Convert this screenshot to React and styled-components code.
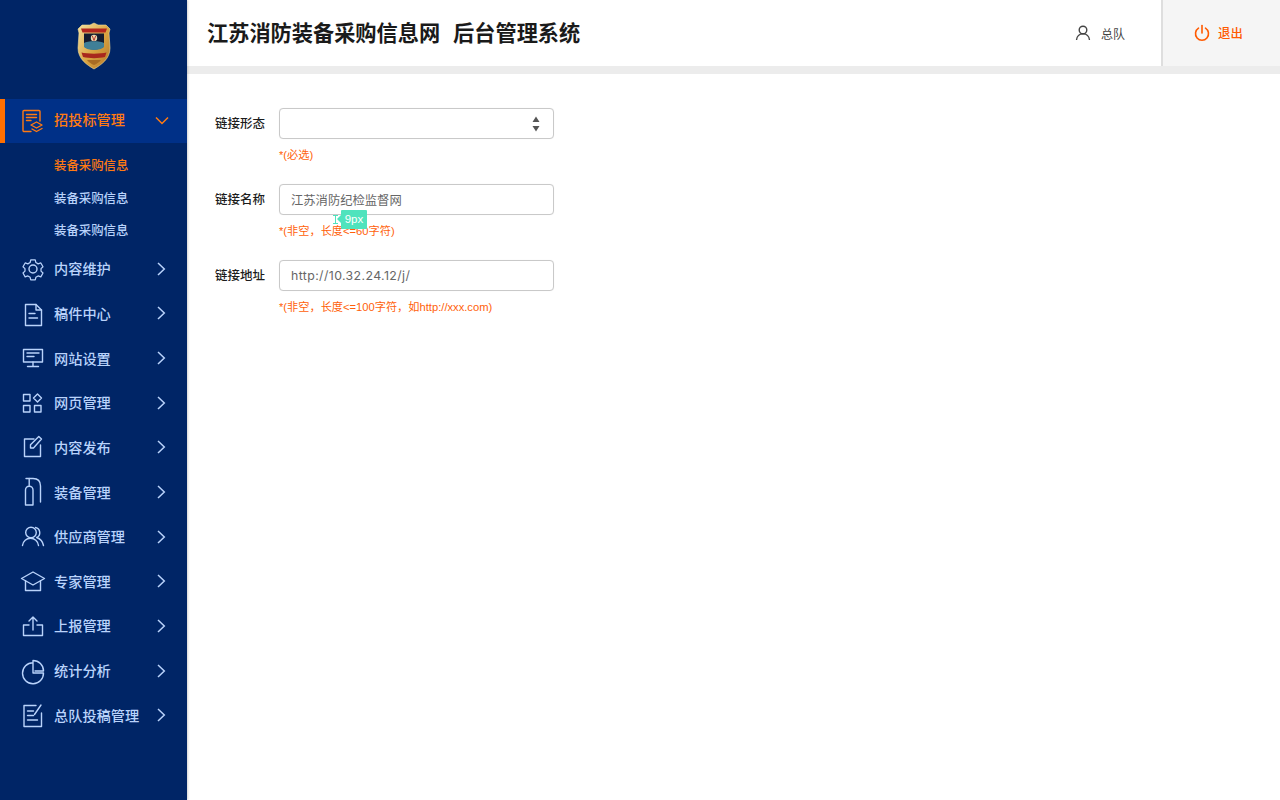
import React from 'react'
import styled, { createGlobalStyle } from 'styled-components'

const Global = createGlobalStyle`
  html, body { margin: 0; padding: 0; background: #fff; }
  body { font-family: "Liberation Sans", "Noto Sans CJK SC", sans-serif; }
  * { box-sizing: border-box; }
`

const Page = styled.div`
  display: flex;
  width: 1280px;
  height: 800px;
  overflow: hidden;
`
const Side = styled.aside`
  width: 187px;
  flex: none;
  background: #002566;
  box-shadow: 1px 0 2px rgba(0, 0, 0, 0.18);
  z-index: 1;
`
const LogoBox = styled.div`
  height: 99px;
  padding: 22px 0 0 77px;
`
const Row = styled.div`
  display: flex;
  align-items: center;
  height: ${p => (p.$open ? '44px' : '44.65px')};
  padding-left: ${p => (p.$open ? '16px' : '21px')};
  background: ${p => (p.$open ? '#003087' : 'transparent')};
  border-left: ${p => (p.$open ? '5px solid #ff6f00' : 'none')};
  color: ${p => (p.$open ? '#ff7a12' : '#b9d3fb')};
  font-size: 14.2px;
  font-weight: 500;
`
const IconSlot = styled.span`
  width: 24px;
  height: 24px;
  flex: none;
  display: flex;
  svg { display: block; overflow: visible; }
`
const RowName = styled.span`
  margin-left: 9px;
  padding-bottom: ${p => (p.$open ? '4px' : '1px')};
  flex: 1;
  white-space: nowrap;
`
const Arrow = styled.span`
  width: ${p => (p.$open ? '14px' : '12px')};
  height: 14px;
  margin-right: ${p => (p.$open ? '18px' : '20px')};
  display: flex;
`
const SubList = styled.div`
  padding-top: 7px;
  margin-bottom: -1px;
`
const SubItem = styled.div`
  height: 32.5px;
  line-height: 32px;
  padding-left: 54px;
  font-size: 12.4px;
  font-weight: 500;
  color: ${p => (p.$on ? '#ff7a12' : '#b9d3fb')};
`
const Main = styled.main`
  flex: 1;
  min-width: 0;
  display: flex;
  flex-direction: column;
`
const Top = styled.header`
  height: 74px;
  display: flex;
  align-items: stretch;
  border-bottom: 8px solid #ececec;
`
const Title = styled.h1`
  flex: 1;
  margin: 0;
  padding-left: 20px;
  font-family: "Noto Sans CJK SC", sans-serif;
  font-size: 21.2px;
  font-weight: 700;
  line-height: 64px;
  color: #1a1a1a;
  white-space: nowrap;
`
const TitleTail = styled.span`
  margin-left: 13px;
`
const User = styled.div`
  width: 86px;
  display: flex;
  align-items: center;
  gap: 10px;
  font-size: 12px;
  color: #444;
`
const Logout = styled.div`
  width: 119px;
  display: flex;
  align-items: center;
  padding-left: 31px;
  gap: 8px;
  background: #f5f5f5;
  border-left: 2px solid #dedede;
  color: #ff5a00;
  font-size: 12.4px;
  font-weight: 500;
`
const Form = styled.form`
  position: relative;
  padding: 34px 0 0 28px;
  display: flex;
  flex-direction: column;
  gap: 22.5px;
`
const Field = styled.div`
  display: grid;
  grid-template-columns: 50px 275px;
  column-gap: 14px;
  row-gap: 9.5px;
  align-items: center;
`
const Label = styled.label`
  font-size: 12.5px;
  font-weight: 500;
  line-height: 33px;
  height: 31px;
  color: #1c1c1c;
  white-space: nowrap;
`
const Control = styled.div`
  height: 31px;
  padding: 0 11px;
  display: flex;
  align-items: center;
  justify-content: space-between;
  border: 1px solid #c9c9c9;
  border-radius: 4px;
  box-shadow: 0 0 1px rgba(0, 0, 0, 0.08);
  font-family: Inter, "Noto Sans CJK SC", sans-serif;
  font-size: 12.3px;
  letter-spacing: ${p => (p.$url ? '0.4px' : '0')};
  color: #666;
  background: #fff;
`
const SortBox = styled.span`
  display: flex;
  margin-right: 2px;
`
const Hint = styled.div`
  grid-column: 2;
  height: 13px;
  line-height: 13px;
  font-size: 11.2px;
  color: #ff5f0a;
  white-space: nowrap;
`
const Measure = styled.div`
  position: absolute;
  left: 146px;
  top: 136px;
  display: flex;
  align-items: center;
  height: 19px;
`
const MeasureTag = styled.span`
  position: relative;
  margin-left: 3px;
  width: 26px;
  height: 19px;
  line-height: 19px;
  text-align: center;
  font-size: 11.5px;
  color: #fff;
  background: #4fe3bd;
  border-radius: 1px;
  &::before {
    content: "";
    position: absolute;
    left: -4px;
    top: 5px;
    border-style: solid;
    border-width: 4.5px 4px 4.5px 0;
    border-color: transparent #4fe3bd transparent transparent;
  }
`

const Ic = ({ children }) => (
  <svg width="24" height="24" viewBox="0 0 24 24" fill="none" stroke="currentColor" strokeWidth="1.4" strokeLinejoin="round" strokeLinecap="round">
    {children}
  </svg>
)

const Right = () => (
  <svg width="12" height="14" viewBox="0 0 12 14" fill="none" stroke="currentColor" strokeWidth="1.5"><path d="M3 1 9.300 7 3 13" /></svg>
)
const Down = () => (
  <svg width="14" height="14" viewBox="0 0 14 14" fill="none" stroke="currentColor" strokeWidth="1.5"><path d="M1 3.500 7 9.500 13 3.500" /></svg>
)

const icons = {
  tender: <Ic><path d="M10 22.500H3a1 1 0 0 1-1-1V2.500a1 1 0 0 1 1-1h15a1 1 0 0 1 1 1V12" /><path d="M5.500 5.500h10M5.500 8.500h10M5.500 11.500H10" /><path d="m10 16 5.500-3 5.500 3-5.500 3z" /><path d="m11 20 4.500 2.500 5.500-3" /></Ic>,
  gear: <Ic><circle cx="12" cy="12" r="4" /><path d="M9.500 1.800h5l.7 3 2.500 1.500 3-1 2.400 4.200-2.200 2.100v2.800l2.200 2.100-2.400 4.200-3-1-2.500 1.500-.7 3h-5l-.7-3-2.500-1.500-3 1L.9 16.500l2.200-2.100v-2.800L.9 9.500l2.400-4.200 3 1 2.500-1.500z" transform="translate(1.200 1.200) scale(.9)" /></Ic>,
  file: <Ic><path d="M4.500 3.500H15L20.500 9v15.500h-16z" /><path d="M15 3.500V9h5.500" /><path d="M8 12.500h6M8 17h8.500" /></Ic>,
  screen: <Ic><rect x="2.500" y="3.500" width="19" height="12.500" /><path d="M6 7h12M6 10.500h7M12 16v4.500M6.500 20.500h11" /></Ic>,
  apps: <Ic><rect x="2.500" y="3.500" width="6.500" height="6.500" /><path d="m16.500 3 4 4-4 4-4-4z" /><rect x="2.500" y="14.500" width="6.500" height="6.500" /><rect x="13.500" y="14.500" width="6.500" height="6.500" /></Ic>,
  edit: <Ic><path d="M13 4H3.500v17.500h16V10" /><path d="M9.500 13V9.800L17.800 1.500l2.700 2.500-8 9z" /></Ic>,
  tank: <Ic><path d="M4.500 25V10a3.700 3.700 0 0 1 7.500 0v15z" /><path d="M5-1.500h7c5 0 7.500 2.500 7.500 7.500v16" /><path d="M8.200-1.500v7" /></Ic>,
  people: <Ic><circle cx="10" cy="7.500" r="5.300" /><path d="M1.500 20.500c.5-4.500 4-7.200 8-7.200s7.500 2.700 8 7.200" /><path d="M14.500 2.500a5.300 5.300 0 0 1 1.200 10c3.300 1.200 6 3.700 6.800 8" /></Ic>,
  cap: <Ic><path d="M12 3 23.500 9.500 12 16 .5 9.500z" /><path d="M4.500 11.700v9.800h15v-9.800" /></Ic>,
  upload: <Ic><path d="M8 11H2.500v10.500h19V11H16" /><path d="M12 16V3M8 7l4-4 4 4" /></Ic>,
  pie: <Ic><path d="M12 3.700A10.500 10.500 0 1 0 22.500 14H12V1.500A10.500 10.500 0 0 1 22.500 12H14" /></Ic>,
  report: <Ic><path d="M15 2.500H3v21h17.500V10" /><path d="M6.500 8h6M6.500 12.500h6M6.500 17h10" /><path d="M13.500 11.500 20 2" /></Ic>,
}

const menu = [
  ['gear', '内容维护'], ['file', '稿件中心'], ['screen', '网站设置'], ['apps', '网页管理'],
  ['edit', '内容发布'], ['tank', '装备管理'], ['people', '供应商管理'], ['cap', '专家管理'],
  ['upload', '上报管理'], ['pie', '统计分析'], ['report', '总队投稿管理'],
]

const Badge = () => (
  <svg width="34" height="48" viewBox="0 0 34 48">
    <defs>
      <linearGradient id="gold" x1="0" y1="0" x2="1" y2="1">
        <stop offset="0" stopColor="#f6e2a0" />
        <stop offset="0.55" stopColor="#d9a441" />
        <stop offset="1" stopColor="#b4752a" />
      </linearGradient>
    </defs>
    <path d="M17 1 21 3 29 3 33 7 32 11 33 26C33 37 24 43 17 47 10 43 1 37 1 26L2 11 1 7 5 3 13 3Z" fill="url(#gold)" stroke="#f4dd97" strokeWidth="0.6" />
    <path d="M4 6.500h26l-1.500 4h-23z" fill="#b3261e" />
    <path d="M7 11.500h20v13c-2 2-6 3-10 3s-8-1-10-3z" fill="#141c30" />
    <circle cx="17" cy="16" r="3.200" fill="#e9d9b0" />
    <path d="M15.300 13.800 17 18.500l1.700-4.700" stroke="#b3261e" fill="none" strokeWidth="0.9" />
    <path d="M7 21c3-2.500 17-2.500 20 0v4c-2 2-6 3-10 3s-8-1-10-3z" fill="#3f7f97" />
    <path d="M4.500 30.500c5 1.500 20 1.500 25 0l-1.500 4.500c-6 1.500-16 1.500-22 0z" fill="#a8281d" />
    <path d="M10 38h14c-2 2.500-4.500 4-7 5-2.500-1-5-2.500-7-5z" fill="#a86c24" />
  </svg>
)

const Power = () => (
  <svg width="16" height="18" viewBox="0 0 16 18" fill="none" stroke="currentColor" strokeWidth="1.6" strokeLinecap="round"><path d="M8 1.500V9" /><path d="M4.500 4.200a6.500 6.500 0 1 0 7 0" /></svg>
)
const Person = () => (
  <svg width="16" height="16" viewBox="0 0 16 16" fill="none" stroke="#444" strokeWidth="1.4"><circle cx="8" cy="5" r="3.800" /><path d="M1.500 15c.3-3.800 3-6.200 6.500-6.200s6.200 2.400 6.500 6.200" /></svg>
)
const Sort = () => (
  <svg width="8" height="16" viewBox="0 0 8 16" fill="#555"><path d="M4 0.500 7.500 6h-7zM4 15.500.5 10h7z" /></svg>
)
const Beam = () => (
  <svg width="5" height="9" viewBox="0 0 5 9" fill="none" stroke="#4fe3bd" strokeWidth="1"><path d="M0 .5h5M0 8.500h5M2.500 .5v8" /></svg>
)

export default function App() {
  return (
    <Page>
      <Global />
      <Side>
        <LogoBox><Badge /></LogoBox>
        <Row $open>
          <IconSlot>{icons.tender}</IconSlot>
          <RowName $open>招投标管理</RowName>
          <Arrow $open><Down /></Arrow>
        </Row>
        <SubList>
          <SubItem $on>装备采购信息</SubItem>
          <SubItem>装备采购信息</SubItem>
          <SubItem>装备采购信息</SubItem>
        </SubList>
        {menu.map(([icon, name]) => (
          <Row key={name}>
            <IconSlot>{icons[icon]}</IconSlot>
            <RowName>{name}</RowName>
            <Arrow><Right /></Arrow>
          </Row>
        ))}
      </Side>
      <Main>
        <Top>
          <Title>江苏消防装备采购信息网<TitleTail>后台管理系统</TitleTail></Title>
          <User><Person />总队</User>
          <Logout><Power />退出</Logout>
        </Top>
        <Form>
          <Field>
            <Label>链接形态</Label>
            <Control><span /><SortBox><Sort /></SortBox></Control>
            <Hint>*(必选)</Hint>
          </Field>
          <Field>
            <Label>链接名称</Label>
            <Control>江苏消防纪检监督网</Control>
            <Hint>*(非空，长度&lt;=60字符)</Hint>
          </Field>
          <Field>
            <Label>链接地址</Label>
            <Control $url>http://10.32.24.12/j/</Control>
            <Hint>*(非空，长度&lt;=100字符，如http://xxx.com)</Hint>
          </Field>
          <Measure>
            <Beam />
            <MeasureTag>9px</MeasureTag>
          </Measure>
        </Form>
      </Main>
    </Page>
  )
}
